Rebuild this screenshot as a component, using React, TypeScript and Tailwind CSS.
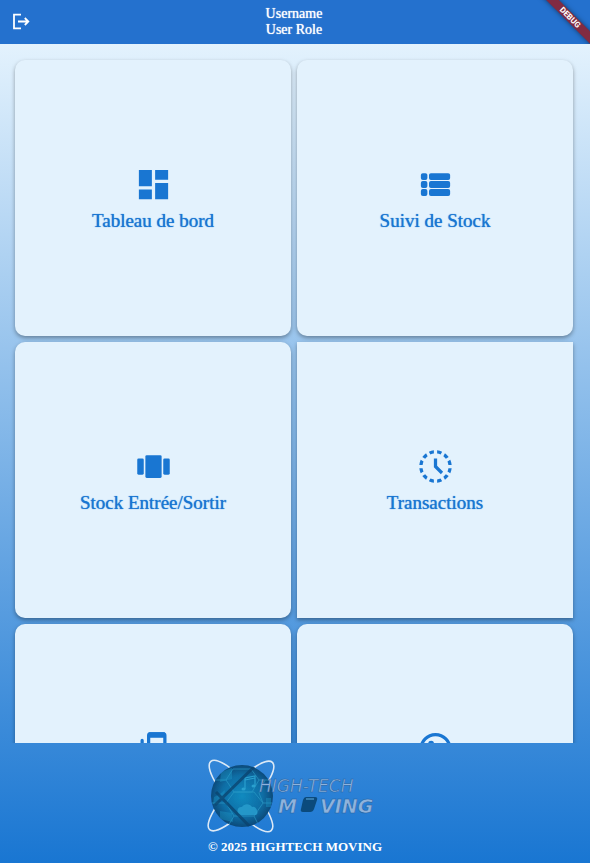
import type { ReactNode } from "react";
import { MdDashboard, MdHistoryToggleOff } from "react-icons/md";

type Tile = { id: string; label?: string; icon: ReactNode; square?: boolean };

const iconClass = "size-[39px] shrink-0";

function ListIcon() {
  return (
    <svg viewBox="0 0 24 24" className={iconClass} fill="currentColor" aria-hidden="true">
      {[5, 9.9, 14.8].map((y) => (
        <g key={y}>
          <rect x="3" y={y} width="4" height="4.2" rx="1.2" />
          <rect x="8" y={y} width="13" height="4.2" rx="1.2" />
        </g>
      ))}
    </svg>
  );
}

function CarouselIcon() {
  return (
    <svg viewBox="0 0 24 24" className={iconClass} fill="currentColor" aria-hidden="true">
      <rect x="2" y="7" width="4" height="10" rx="0.8" />
      <rect x="7" y="5" width="10" height="14" rx="0.8" />
      <rect x="18" y="7" width="4" height="10" rx="0.8" />
    </svg>
  );
}

function FeedIcon() {
  return (
    <svg viewBox="0 0 24 24" className={iconClass} fill="none" stroke="currentColor" strokeWidth="2" aria-hidden="true">
      <path d="M5 7V20h11" strokeLinecap="round" />
      <rect x="9" y="3" width="10" height="14" rx="1" />
      <path d="M9 3.700h10" strokeWidth="3.400" />
    </svg>
  );
}

function FaceIcon() {
  return (
    <svg viewBox="0 0 24 24" className={iconClass} fill="none" stroke="currentColor" strokeWidth="2" aria-hidden="true">
      <circle cx="12" cy="12.500" r="9" />
      <circle cx="9.300" cy="9" r="1.800" fill="currentColor" stroke="none" />
      <path d="M6 17c1-4 6-4 7 0" />
    </svg>
  );
}

const tiles: Tile[] = [
  { id: "dashboard", label: "Tableau de bord", icon: <MdDashboard className={iconClass} /> },
  { id: "stock", label: "Suivi de Stock", icon: <ListIcon /> },
  { id: "movement", label: "Stock Entrée/Sortir", icon: <CarouselIcon /> },
  { id: "transactions", label: "Transactions", icon: <MdHistoryToggleOff className={iconClass} />, square: true },
  { id: "feed", icon: <FeedIcon /> },
  { id: "face", icon: <FaceIcon /> },
];

function TileCard({ tile }: { tile: Tile }) {
  return (
    <button
      type="button"
      className={
        "flex aspect-square w-full flex-col items-center justify-center gap-1 bg-[#e3f2fd] text-[#1976d2] shadow-[0_2px_4px_rgba(0,0,0,0.35)] " +
        (tile.square ? "rounded-none" : "rounded-[10px]")
      }
    >
      {tile.icon}
      <span className="h-6 text-[19px] leading-[26px] [text-shadow:0_0_1px_currentColor]">{tile.label}</span>
    </button>
  );
}

function Logo() {
  return (
    <svg viewBox="0 0 178 76" className="h-[76px] w-[178px]" role="img" aria-label="High-Tech Moving">
      <defs>
        <radialGradient id="ball" cx="0.5" cy="0.5" r="0.55">
          <stop offset="0" stopColor="#118bc0" />
          <stop offset="0.6" stopColor="#106fa6" />
          <stop offset="1" stopColor="#0c416f" />
        </radialGradient>
        <clipPath id="ball-clip">
          <circle cx="36" cy="36" r="31" />
        </clipPath>
      </defs>
      <g transform="translate(0 1)">
        <g fill="none" stroke="#dce9f6" strokeWidth="1.6">
          <ellipse cx="35" cy="36" rx="46" ry="13" transform="rotate(49 35 36)" />
          <ellipse cx="35" cy="36" rx="46" ry="13" transform="rotate(-47 35 36)" />
        </g>
        <circle cx="36" cy="36" r="31" fill="url(#ball)" />
        <g clipPath="url(#ball-clip)">
          <g fill="none" stroke="#2f9fca" strokeWidth="1" opacity="0.6">
            <path d="M27 9h18l8 11-7 12H28l-8-12z" />
            <path d="M28 32l-8 11 8 13h20l9-13-9-11zM53 20h12M57 43h10M48 56l5 10M28 56l-6 10M20 43H5M20 20H7M57 43l-4-10 6-13" />
          </g>
          <g fill="#1f9bca" opacity="0.4">
            <path d="M15 12l11-4v11l-12 3zM14 51l12 2 1 9-13-3zM60 38h5v9h-5zM8 37l6-3 5-4-1 8-5 2-2 5-4-1z" />
          </g>
          <path d="M35 55a4 4 0 0 1 1-8 6 6 0 0 1 10 0 4 4 0 0 1 5 4 3 3 0 0 1-1 4z" fill="#2ba0cf" opacity="0.8" />
          <path d="M39 29V18l10-2v10M39 20l10-2" fill="none" stroke="#2ba0cf" strokeWidth="1.2" />
          <g fill="#2ba0cf">
            <ellipse cx="37.500" cy="29" rx="2" ry="1.600" />
            <ellipse cx="47.500" cy="26" rx="2" ry="1.600" />
          </g>
          <path d="M10 32l39 40M9 45L50 5" stroke="#0b426d" strokeWidth="3" opacity="0.75" />
        </g>
      </g>
      <g fill="#8fb3dc" stroke="#225e9f" strokeWidth="0.5" fontFamily="'DejaVu Sans', sans-serif" fontStyle="italic">
        <text x="53" y="33" fontSize="17">HIGH-TECH</text>
        <text x="72" y="54" fontSize="19" fontWeight="700">M</text>
        <text x="114" y="54" fontSize="19" fontWeight="700">VING</text>
      </g>
      <path d="M100 38h9q3 0 2 3l-3 9q-1 3-4 3h-7q-3 0-2-3l2-9q1-3 3-3z" fill="#0b4a7c" />
      <path d="M100 40h8" stroke="#61aee0" strokeWidth="1" />
    </svg>
  );
}

export default function App() {
  return (
    <div className="relative flex h-screen flex-col overflow-hidden bg-[#1976d2] font-['Liberation_Serif',serif]">
      <header className="grid h-11 shrink-0 grid-cols-[1fr_auto_1fr] items-center bg-[#2471ce] pr-[14px] pl-3 text-white">
        <button type="button" aria-label="Se déconnecter" className="size-5 justify-self-start">
          <svg viewBox="0 0 20 20" className="size-5" fill="none" stroke="currentColor" strokeWidth="1.8" aria-hidden="true">
            <path d="M9 2.700H2V16.300H9M6 9.500h10M12.800 6l3.500 3.500-3.500 3.500" />
          </svg>
        </button>
        <div className="text-center text-sm leading-4 [text-shadow:0_0_1px_currentColor]">
          <p>Username</p>
          <p>User Role</p>
        </div>
      </header>

      <div className="flex min-h-0 flex-1 flex-col bg-linear-to-b/srgb from-[#e3f2fd] to-[#1976d2]">
        <main className="min-h-0 flex-1 overflow-hidden pt-4 pr-[17px] pl-[15px]">
          <div className="grid grid-cols-2 gap-[6px]">
            {tiles.map((tile) => (
              <TileCard key={tile.id} tile={tile} />
            ))}
          </div>
        </main>
        <footer className="flex shrink-0 flex-col items-center gap-1 pt-4 pb-2 text-white">
          <Logo />
          <p className="text-[13px] leading-4 font-bold">© 2025 HIGHTECH MOVING</p>
        </footer>
      </div>

      <div className="pointer-events-none absolute top-0 right-0 h-11 w-16 overflow-hidden">
        <div className="absolute top-[13px] -right-[30px] h-[9px] w-[100px] rotate-45 bg-[#812b42] text-center font-['Roboto',sans-serif] text-[8px] leading-[9px] font-bold text-white shadow-[0_0_5px_rgba(0,0,0,0.5)]">
          DEBUG
        </div>
      </div>
    </div>
  );
}
